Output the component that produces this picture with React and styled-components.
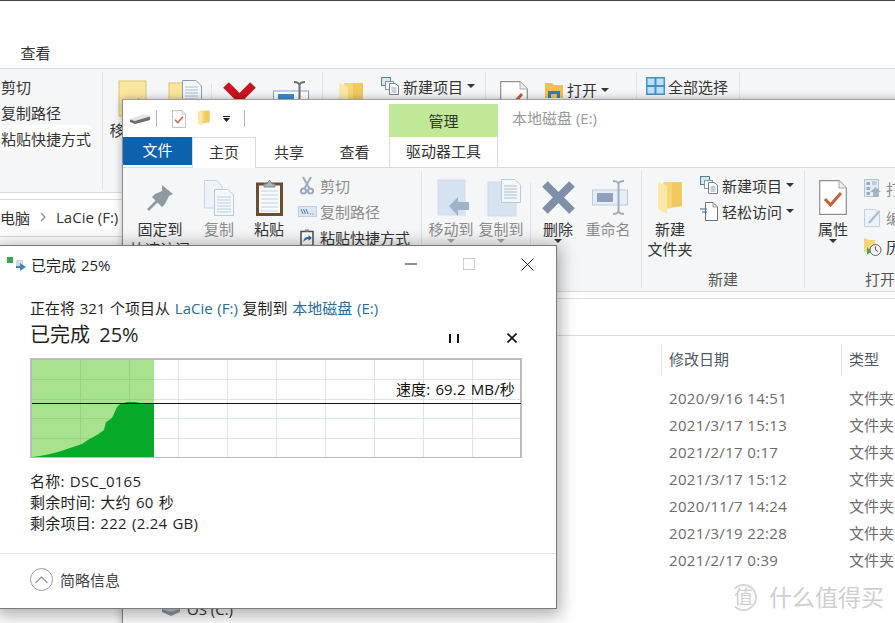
import React from 'react';
import styled, { createGlobalStyle } from 'styled-components';

const GlobalStyle = createGlobalStyle`
  html, body { margin: 0; padding: 0; background: #fff; }
  * { box-sizing: border-box; }
  body {
    font-family: "Open Sans", "Noto Sans CJK SC", sans-serif;
    font-size: 15px;
    color: #333;
  }
`;

const Desktop = styled.div`
  position: relative;
  width: 895px;
  height: 623px;
  overflow: hidden;
  background: #fff;
`;

/* windows sit on a free canvas, so these are the only placed boxes */
const Explorer = styled.section`
  position: absolute;
  left: ${p => p.$left}px;
  top: ${p => p.$top}px;
  width: 1200px;
  height: 700px;
  display: flex;
  flex-direction: column;
  background: #fff;
  border-left: 1px solid #8d8d8d;
  border-top: 1px solid ${p => p.$edge};
  box-shadow: 0 0 8px rgba(0, 0, 0, .3);
`;

const QuickBar = styled.div`
  height: 37px;
  display: flex;
  align-items: center;
  padding-left: 7px;
`;

const QuickSep = styled.i`
  width: 1px;
  height: 17px;
  background: #b4b4b4;
  margin: 0 ${p => p.$right}px 0 ${p => p.$left}px;
`;

const QuickIcon = styled.span`
  display: flex;
  margin-right: ${p => p.$right}px;
`;

const ManageTab = styled.div`
  align-self: flex-end;
  margin-left: 144px;
  width: 109px;
  height: 33px;
  background: #bfe997;
  color: #333;
  text-align: center;
  line-height: 35px;
`;

const DriveTitle = styled.div`
  margin: -2px 0 0 14px;
  color: #999;
`;

const TabRow = styled.div`
  height: 31px;
  display: flex;
  align-items: flex-start;
  border-bottom: 1px solid #dadbdc;
`;

const FileTab = styled.div`
  width: 69px;
  height: 28px;
  background: #0b62ad;
  color: #fff;
  text-align: center;
  line-height: 27px;
`;

const Tab = styled.div`
  width: ${p => p.$width}px;
  height: ${p => (p.$active ? 31 : 30)}px;
  line-height: 29px;
  text-align: center;
  background: #fff;
  border: 1px solid ${p => (p.$active ? '#dadbdc' : 'transparent')};
  border-bottom: none;
  ${p => p.$tool && 'margin-left: 2px; border-top: none; border-left-color: #dadbdc; border-right-color: #dadbdc;'}
`;

const Ribbon = styled.div`
  height: 124px;
  display: flex;
  padding: 3px 0;
  background: #f5f6f7;
  border-bottom: 1px solid #d9dadb;
`;

const Group = styled.div`
  flex: 0 0 ${p => p.$width}px;
  display: flex;
  flex-direction: column;
  border-right: 1px solid #e1e2e3;
`;

const GroupBody = styled.div`
  flex: 1;
  display: flex;
  padding-left: ${p => p.$pad || 0}px;
`;

const GroupLabel = styled.div`
  height: 18px;
  line-height: 18px;
  text-align: center;
  color: #555;
`;

const BigButton = styled.div`
  width: ${p => p.$width}px;
  display: flex;
  flex-direction: column;
  align-items: center;
  padding-top: 5px;
  color: ${p => (p.$off ? '#8b8b8b' : '#333')};
`;

const BigIcon = styled.div`
  height: 43px;
  display: flex;
  align-items: center;
  justify-content: center;
`;

const BigLabel = styled.div`
  line-height: 20px;
  text-align: center;
  white-space: nowrap;
`;

const Caret = styled.i`
  display: block;
  width: 0;
  height: 0;
  border-left: 4px solid transparent;
  border-right: 4px solid transparent;
  border-top: 4px solid ${p => (p.$off ? '#a5a5a5' : '#333')};
  margin: ${p => (p.$inline ? '0 0 0 4px' : '0')};
`;

const InnerSep = styled.i`
  width: 1px;
  height: 78px;
  margin: 12px 2px 0 4px;
  background: #e1e2e3;
`;

const SmallList = styled.div`
  display: flex;
  flex-direction: column;
  margin-left: ${p => p.$left}px;
  padding-top: ${p => p.$top || 1}px;
`;

const SmallItem = styled.div`
  height: ${p => p.$height || 26}px;
  display: flex;
  align-items: center;
  white-space: nowrap;
  color: ${p => (p.$off ? '#8b8b8b' : '#333')};
  background: ${p => (p.$lit ? '#fff' : 'transparent')};
`;

const SmallIcon = styled.span`
  flex: 0 0 22px;
  display: flex;
  align-items: center;
`;

const AddressBar = styled.div`
  margin-top: 6px;
  height: 38px;
  display: flex;
  align-items: center;
  gap: 10px;
  padding: 0 0 2px 181px;
  border-top: 1px solid #dcdcdc;
  border-bottom: 1px solid #dcdcdc;
`;

const Content = styled.div`
  flex: 1;
  display: flex;
`;

const NavPane = styled.div`
  flex: 0 0 197px;
  padding: 261px 0 0 39px;
`;

const NavRow = styled.div`
  height: 24px;
  display: flex;
  align-items: center;
  gap: 7px;
  color: #333;
`;

const FileTable = styled.div`
  padding-top: 8px;
  display: grid;
  grid-template-columns: 341px 180px 200px;
  grid-template-rows: 41px;
  grid-auto-rows: 27px;
  align-content: start;
`;

const HeadCell = styled.div`
  height: 32px;
  line-height: 30px;
  padding-left: 7px;
  color: #4c5a69;
  border-left: 1px solid #e4e5e6;
  grid-row: 1;
  grid-column: ${p => p.$col};
`;

const Cell = styled.div`
  padding-left: 8px;
  line-height: 26px;
  letter-spacing: ${p => (p.$latin ? '.33px' : '0')};
  color: #6b6b6b;
  white-space: nowrap;
  grid-column: ${p => p.$col};
`;

const Dialog = styled.section`
  position: absolute;
  left: -1px;
  top: 245px;
  width: 558px;
  height: 364px;
  display: flex;
  flex-direction: column;
  background: #fff;
  border: 1px solid #7a7a7a;
  box-shadow: 0 3px 16px 3px rgba(0, 0, 0, .33);
  color: #1f1f1f;
`;

const TitleBar = styled.div`
  height: 36px;
  display: flex;
  align-items: center;
  padding-left: 7px;
`;

const TitleText = styled.div`
  flex: 1;
  margin-left: 5px;
  word-spacing: 1px;
`;

const WindowButton = styled.div`
  width: 58px;
  height: 36px;
  display: flex;
  align-items: center;
  justify-content: center;
`;

const DialogBody = styled.div`
  padding: 16px 0 0 30px;
  width: 522px;
`;

const Status = styled.div`
  line-height: 20px;
  white-space: nowrap;
  word-spacing: .8px;
`;

const Place = styled.span`
  color: #2b6c99;
`;

const ProgressRow = styled.div`
  margin-top: 1px;
  height: 28px;
  display: flex;
  align-items: center;
  font-size: 20px;
  word-spacing: 4px;
`;

const ProgressText = styled.div`
  flex: 1;
`;

const ProgressControl = styled.div`
  width: 20px;
  height: 20px;
  margin: 10px 0 0 38px;
  display: flex;
  align-items: center;
  justify-content: center;
`;

const Chart = styled.div`
  position: relative;
  margin-top: 11px;
  width: 492px;
  height: 100px;
  border: 2px solid #bcbcbc;
  border-bottom-width: 1px;
  svg { display: block; overflow: visible; }
`;

const Speed = styled.div`
  position: absolute;
  right: 5px;
  top: 19px;
  line-height: 20px;
  letter-spacing: .15px;
  word-spacing: 1px;
  color: #111;
`;

const Details = styled.div`
  margin-top: 13px;
  line-height: 21px;
  letter-spacing: .25px;
  word-spacing: 1px;
`;

const Footer = styled.div`
  margin-top: 19px;
  flex: 1;
  display: flex;
  align-items: center;
  gap: 7px;
  padding: 0 0 3px 30px;
  border-top: 1px solid #e4e4e4;
  color: #444;
`;

const FoldButton = styled.div`
  width: 23px;
  height: 23px;
  border: 1px solid #9a9a9a;
  border-radius: 50%;
  display: flex;
  align-items: center;
  justify-content: center;
`;

const Watermark = styled.div`
  position: absolute;
  left: 730px;
  top: 583px;
  display: flex;
  align-items: center;
  gap: 12px;
  color: #cfcfcf;
  font-size: 23px;
  line-height: 28px;
`;

const WatermarkMark = styled.div`
  width: 27px;
  height: 27px;
  border: 2px solid #d6d6d6;
  border-left-color: transparent;
  border-radius: 50%;
  font-size: 19px;
  line-height: 22px;
  text-align: center;
`;

// ---- icons ----

const DriveIcon = () => (
  <svg width="20" height="10" viewBox="0 0 20 10">
    <path d="M0 5 L14 0 L20 2 L20 6 L5 10 L0 8Z" fill="#e4e4e4" />
    <path d="M0 5.500 L5 7 L20 2.500 L20 6 L5 10 L0 8Z" fill="#6e6e6e" />
  </svg>
);

const CheckPage = ({ w = 28, h = 35 }) => (
  <svg width={w} height={h} viewBox="0 0 28 35">
    <path d="M.7.7H20L27.3 8V34.3H.7Z" fill="#fff" stroke="#8f8f8f" strokeWidth="1.2" />
    <path d="M20 .7V8H27.3" fill="#eee" stroke="#aaa" />
    <path d="M6 19L11.5 25L22 13" fill="none" stroke="#c8603a" strokeWidth="3" />
  </svg>
);

const Folder = ({ w = 25, h = 34 }) => (
  <svg width={w} height={h} viewBox="0 0 25 34">
    <path d="M5 1H24V25L8 28Z" fill="#f6d676" />
    <path d="M14 1H24V25L14 26Z" fill="#f1c95f" />
    <path d="M0 1L9 5V33L0 28Z" fill="#fbe8a8" />
  </svg>
);

const Pin = () => (
  <svg width="27" height="27" viewBox="0 0 27 27">
    <path d="M15 1L26 10L22 12L18 20L15 23L5 13L8 10L15 7Z" fill="#8e99a2" />
    <path d="M10 17L1 26" stroke="#8e99a2" strokeWidth="2.6" />
  </svg>
);

const CopyDocs = () => (
  <svg width="30" height="36" viewBox="0 0 30 36">
    <path d="M.5.5H13L18 6V28H.5Z" fill="#eef3fa" stroke="#c6d4e6" />
    <path d="M10.5 9.5H24L29.5 15V35.5H10.5Z" fill="#f4f7fb" stroke="#b9cadf" />
    <path d="M13 17H27M13 20H27M13 23H27M13 26H27M13 29H27M13 32H27" stroke="#bccde0" />
  </svg>
);

const Clipboard = () => (
  <svg width="27" height="37" viewBox="0 0 27 37">
    <rect x="1.5" y="5" width="24" height="30.5" fill="#f7f9fb" stroke="#6d4c30" strokeWidth="3" />
    <path d="M5 12H22M5 16H22M5 20H22M5 24H22M5 28H22M5 32H22" stroke="#c3d2e2" />
    <path d="M8 8V5H11L13.500 1L16 5H19V8Z" fill="#a9b4be" stroke="#7d8790" />
  </svg>
);

const Scissors = () => (
  <svg width="16" height="19" viewBox="-2 0 16 19" fill="none" stroke="#9aacc0" strokeWidth="2">
    <circle cx="3.500" cy="15" r="2.600" />
    <circle cx="10.500" cy="15" r="2.600" />
    <path d="M4.500 12.500L11 1M9.500 12.500L3 1" />
  </svg>
);

const PathIcon = () => (
  <svg width="19" height="11" viewBox="0 0 19 11">
    <rect x=".5" y=".5" width="18" height="10" fill="#dce5f2" stroke="#c0cde0" />
    <path d="M3 3L5 8M5.500 3L7.500 8M8 3L10 8" stroke="#5d7391" />
    <path d="M12 8H13M14.500 8H15.500" stroke="#5d7391" />
  </svg>
);

const PasteLink = () => (
  <svg width="17" height="17" viewBox="-2 0 17 17">
    <rect x="1" y="2.500" width="12" height="14" fill="#fff" stroke="#4b4b4b" strokeWidth="1.500" />
    <path d="M5 2.500H9V.5H5Z" fill="#888" />
    <path d="M3.500 13C3.500 9 5.500 8 8.500 8V6L12 9L8.500 12V10C6.500 10 5 11 3.500 13Z" fill="#2a6da8" />
  </svg>
);

const MoveIcon = ({ on }) => (
  <svg width="38" height="38" viewBox="-5 0 38 38">
    <rect x="1" y="1" width="27" height="35" fill={on ? '#fbe6a0' : '#d8e3f1'} stroke={on ? '#d9c37a' : '#d0dcec'} />
    <path d="M12 27L21 18V23H32V31H21V37Z" fill={on ? '#5a5a5a' : '#9fb3cc'} />
  </svg>
);

const CopyToIcon = ({ on }) => (
  <svg width="40" height="38" viewBox="-6 0 40 38">
    <rect x="1" y="3" width="28" height="34" fill={on ? '#fbe6a0' : '#d8e3f1'} stroke={on ? '#d9c37a' : '#d0dcec'} />
    <path d="M14.500.5H28L33.500 6V23.500H14.500Z" fill="#f4f7fb" stroke={on ? '#8d9db0' : '#b9cadf'} />
    <path d="M17 7H30M17 10H30M17 13H30M17 16H30M17 19H30" stroke="#a9bdd5" />
  </svg>
);

const DeleteIcon = ({ on }) => (
  <svg width="33" height="33" viewBox="0 0 33 33">
    <path d="M3 3L30 30M30 3L3 30" stroke={on ? '#c8141e' : '#7f8fa9'} strokeWidth="8" />
  </svg>
);

const RenameIcon = ({ on }) => (
  <svg width="39" height="35" viewBox="-3 0 39 35">
    <rect x=".5" y="10" width="35" height="15" fill={on ? '#fff' : '#e7edf5'} stroke={on ? '#7da7cf' : '#bcc9dc'} />
    <rect x="5" y="13" width="16" height="9" fill={on ? '#3b8bd4' : '#8ea0bb'} />
    <path d="M21 1C24 1 26 2 26.500 4V31C26 33 24 34 21 34M32 1C29 1 27 2 26.500 4M26.500 31C27 33 29 34 32 34" fill="none" stroke={on ? '#6f6f6f' : '#a0adc0'} strokeWidth="2" />
  </svg>
);

const NewItemIcon = () => (
  <svg width="18" height="18" viewBox="0 0 18 18">
    <rect x=".5" y=".5" width="9" height="8" fill="#d5e6ee" stroke="#4f8596" />
    <rect x="4.500" y="4.500" width="8" height="8" fill="#f4f7fb" stroke="#8a98a6" />
    <path d="M8.500 6.500H14L17.500 9V17.500H8.500Z" fill="#fff" stroke="#77838f" />
    <path d="M10.500 11H15.500M10.500 13H15.500M10.500 15H15.500" stroke="#8fa4b8" />
  </svg>
);

const EasyIcon = () => (
  <svg width="18" height="19" viewBox="0 0 18 19">
    <path d="M5.500.5H13L17.500 5V18.500H5.500Z" fill="#fff" stroke="#6f6f6f" />
    <path d="M13 .5V5H17.500" fill="none" stroke="#9a9a9a" />
    <path d="M0 7H7M2 10H7" stroke="#2a6da8" strokeWidth="1.200" />
  </svg>
);

const OpenIcon = ({ on }) =>
  on ? (
    <svg width="19" height="18" viewBox="0 0 19 18">
      <path d="M0 2H7L9 4H18V17H0Z" fill="#f2c04f" />
      <path d="M3 10H15V17H12V13H6V17H3Z" fill="#2f7fb8" />
    </svg>
  ) : (
    <svg width="17" height="19" viewBox="0 0 17 19">
      <rect x=".5" y=".5" width="14" height="17" fill="#e6ecf4" stroke="#b5c2d2" />
      <path d="M2.500 3H6V6H2.500ZM2.500 8H6V11H2.500ZM2.500 13H6V16H2.500Z" fill="#9aaabd" />
      <path d="M8 3H12.500M8 5H12.500" stroke="#9aaabd" />
      <path d="M11.500 8L17 13H14V18H9V13H6Z" fill="#a3b4c8" />
    </svg>
  );

const EditIcon = () => (
  <svg width="17" height="18" viewBox="0 0 17 18">
    <path d="M.5.5H11L15.500 5V17.500H.5Z" fill="#eef3fa" stroke="#c0cfe0" />
    <path d="M5 14L15.500 2" stroke="#a9bdd5" strokeWidth="2.400" />
  </svg>
);

const HistoryIcon = () => (
  <svg width="18" height="18" viewBox="0 0 18 18">
    <path d="M0 0L6 2H11V14H0Z" fill="#f6d676" />
    <circle cx="11.500" cy="12" r="5.500" fill="#f1f1f1" stroke="#666" />
    <path d="M11.500 8.500V12L14 13.500" fill="none" stroke="#555" />
    <path d="M3 9L7 13.500L3 17Z" fill="#3ea552" />
  </svg>
);

const SelectAllIcon = () => (
  <svg width="19" height="18" viewBox="0 0 19 18">
    <rect width="19" height="18" fill="#3f93d4" />
    <path d="M1.500 1.500H8.500V8H1.500ZM10.500 1.500H17.500V8H10.500ZM1.500 10H8.500V16.500H1.500ZM10.500 10H17.500V16.500H10.500Z" fill="#bfe0f5" />
  </svg>
);

const QuickCaret = () => (
  <svg width="7" height="6" viewBox="0 0 7 6">
    <path d="M0 0H7V1H0ZM0 2H7L3.500 6Z" fill="#222" />
  </svg>
);

const Chevron = () => (
  <svg width="6" height="10" viewBox="0 0 6 10">
    <path d="M1 1L5 5L1 9" fill="none" stroke="#8a8a8a" strokeWidth="1.200" />
  </svg>
);

const ComputerDrive = () => (
  <svg width="18" height="13" viewBox="0 0 18 13">
    <path d="M0 6L9 3L18 6V9L9 13L0 9Z" fill="#8d9aa5" />
    <path d="M0 6L9 9L18 6L9 3Z" fill="#c4ccd3" />
    <path d="M3 0H8V4H3Z" fill="#3f93d4" />
  </svg>
);

const CopyGlyph = () => (
  <svg width="19" height="14" viewBox="0 0 19 14">
    <rect width="6" height="6" fill="#3ea552" />
    <rect x="9" y="3" width="7" height="6" fill="#d5dbe0" />
    <path d="M9 9H13V6L19 10L13 14V11H9Z" fill="#3c87c9" />
  </svg>
);

const Minimize = () => (
  <svg width="12" height="2" viewBox="0 0 12 2"><path d="M0 1H12" stroke="#222" /></svg>
);

const Maximize = () => (
  <svg width="12" height="12" viewBox="0 0 12 12"><rect x=".5" y=".5" width="11" height="11" fill="none" stroke="#cdcdcd" /></svg>
);

const CloseThin = () => (
  <svg width="13" height="13" viewBox="0 0 13 13"><path d="M.5.5L12.500 12.500M12.500.5L.5 12.500" stroke="#222" /></svg>
);

const Pause = () => (
  <svg width="10" height="9" viewBox="0 0 10 9"><path d="M1 0V9M9 0V9" stroke="#111" strokeWidth="2" /></svg>
);

const CloseBold = () => (
  <svg width="10" height="10" viewBox="0 0 10 10"><path d="M.5.5L9.500 9.500M9.500.5L.5 9.500" stroke="#111" strokeWidth="1.600" /></svg>
);

const FoldChevron = () => (
  <svg width="13" height="8" viewBox="0 0 13 8"><path d="M.5 7L6.500 1L12.500 7" fill="none" stroke="#9a9a9a" strokeWidth="1.300" /></svg>
);

// ---- speed chart ----

const chartW = 488;
const chartH = 97;
const gridX = [48, 97, 146, 195, 244, 293, 342, 391, 440];
const gridY = [19, 39, 58, 78];
const doneX = 122;

// traced from the curve: [x, y] inside the plot
const curve = [
  [0, 97], [8, 96], [18, 94], [26, 92], [35, 89], [41, 87], [50, 84], [56, 80],
  [65, 75], [72, 70], [74, 62], [80, 58], [85, 47], [88, 44], [95, 42], [103, 42],
  [113, 44], [122, 44], [122, 97],
];

const SpeedChart = () => (
  <svg width={chartW} height={chartH} viewBox={`0 0 ${chartW} ${chartH}`}>
    <rect width={doneX} height={chartH} fill="#a8e28f" />
    {gridX.map(x => (
      <path key={x} d={`M${x + .5} 0V${chartH}`} stroke={x < doneX ? '#96d580' : '#d9e9e1'} />
    ))}
    {gridY.map(y => (
      <React.Fragment key={y}>
        <path d={`M0 ${y + .5}H${doneX}`} stroke="#96d580" />
        <path d={`M${doneX} ${y + .5}H${chartW}`} stroke="#d9e9e1" />
      </React.Fragment>
    ))}
    <polygon points={curve.map(p => p.join(',')).join(' ')} fill="#08aa2a" />
    <path d={`M0 43.5H${chartW + 1}`} stroke="#111" />
  </svg>
);

// ---- explorer window ----

const rows = [
  '2020/9/16 14:51',
  '2021/3/17 15:13',
  '2021/2/17 0:17',
  '2021/3/17 15:12',
  '2020/11/7 14:24',
  '2021/3/19 22:28',
  '2021/2/17 0:39',
];

const ExplorerWindow = ({ left, top, edge, on, drive, place, lit }) => (
  <Explorer $left={left} $top={top} $edge={edge}>
    <QuickBar>
      <QuickIcon><DriveIcon /></QuickIcon>
      <QuickSep $left={6} $right={15} />
      <QuickIcon $right={12}><CheckPage w={14} h={18} /></QuickIcon>
      <QuickIcon $right={13}><Folder w={12} h={17} /></QuickIcon>
      <QuickIcon><QuickCaret /></QuickIcon>
      <QuickSep $left={14} $right={0} />
      {drive && <ManageTab>管理</ManageTab>}
      {drive && <DriveTitle>{drive}</DriveTitle>}
    </QuickBar>
    <TabRow>
      <FileTab>文件</FileTab>
      <Tab $width={64} $active>主页</Tab>
      <Tab $width={66}>共享</Tab>
      <Tab $width={65}>查看</Tab>
      {drive && <Tab $width={109} $tool>驱动器工具</Tab>}
    </TabRow>
    <Ribbon>
      <Group $width={299}>
        <GroupBody>
          <BigButton $width={74}>
            <BigIcon><Pin /></BigIcon>
            <BigLabel>固定到<br />快速访问</BigLabel>
          </BigButton>
          <BigButton $width={44} $off={!on}>
            <BigIcon><CopyDocs /></BigIcon>
            <BigLabel>复制</BigLabel>
          </BigButton>
          <BigButton $width={56}>
            <BigIcon><Clipboard /></BigIcon>
            <BigLabel>粘贴</BigLabel>
          </BigButton>
          <SmallList $left={1}>
            <SmallItem $off={!on}><SmallIcon><Scissors /></SmallIcon>剪切</SmallItem>
            <SmallItem $off={!on}><SmallIcon><PathIcon /></SmallIcon>复制路径</SmallItem>
            <SmallItem $lit={lit}><SmallIcon><PasteLink /></SmallIcon>粘贴快捷方式</SmallItem>
          </SmallList>
        </GroupBody>
        <GroupLabel>剪贴板</GroupLabel>
      </Group>
      <Group $width={220}>
        <GroupBody $pad={4}>
          <BigButton $width={50} $off={!on}>
            <BigIcon><MoveIcon on={on} /></BigIcon>
            <BigLabel>移动到</BigLabel>
            <Caret $off={!on} />
          </BigButton>
          <BigButton $width={50} $off={!on}>
            <BigIcon><CopyToIcon on={on} /></BigIcon>
            <BigLabel>复制到</BigLabel>
            <Caret $off={!on} />
          </BigButton>
          <InnerSep />
          <BigButton $width={50}>
            <BigIcon><DeleteIcon on={on} /></BigIcon>
            <BigLabel>删除</BigLabel>
            <Caret />
          </BigButton>
          <BigButton $width={50} $off={!on}>
            <BigIcon><RenameIcon on={on} /></BigIcon>
            <BigLabel>重命名</BigLabel>
          </BigButton>
        </GroupBody>
        <GroupLabel>组织</GroupLabel>
      </Group>
      <Group $width={163}>
        <GroupBody>
          <BigButton $width={56}>
            <BigIcon><Folder /></BigIcon>
            <BigLabel>新建<br />文件夹</BigLabel>
          </BigButton>
          <SmallList $left={2}>
            <SmallItem><SmallIcon><NewItemIcon /></SmallIcon>新建项目<Caret $inline /></SmallItem>
            <SmallItem><SmallIcon><EasyIcon /></SmallIcon>轻松访问<Caret $inline /></SmallItem>
          </SmallList>
        </GroupBody>
        <GroupLabel>新建</GroupLabel>
      </Group>
      <Group $width={151}>
        <GroupBody>
          <BigButton $width={56}>
            <BigIcon><CheckPage /></BigIcon>
            <BigLabel>属性</BigLabel>
            <Caret />
          </BigButton>
          <SmallList $left={3} $top={3}>
            <SmallItem $height={29} $off={!on}><SmallIcon><OpenIcon on={on} /></SmallIcon>打开<Caret $inline /></SmallItem>
            <SmallItem $height={29} $off={!on}><SmallIcon><EditIcon /></SmallIcon>编辑</SmallItem>
            <SmallItem $height={29}><SmallIcon><HistoryIcon /></SmallIcon>历史记录</SmallItem>
          </SmallList>
        </GroupBody>
        <GroupLabel>打开</GroupLabel>
      </Group>
      <Group $width={103}>
        <GroupBody>
          <SmallList $left={9}>
            <SmallItem><SmallIcon><SelectAllIcon /></SmallIcon>全部选择</SmallItem>
          </SmallList>
        </GroupBody>
        <GroupLabel>选择</GroupLabel>
      </Group>
    </Ribbon>
    <AddressBar>
      此电脑<Chevron />{place}
    </AddressBar>
    <Content>
      <NavPane>
        <NavRow><ComputerDrive />OS (C:)</NavRow>
      </NavPane>
      {drive && (
        <FileTable>
          <HeadCell $col={2}>修改日期</HeadCell>
          <HeadCell $col={3}>类型</HeadCell>
          {rows.map(r => (
            <React.Fragment key={r}>
              <Cell $col={2} $latin>{r}</Cell>
              <Cell $col={3}>文件夹</Cell>
            </React.Fragment>
          ))}
        </FileTable>
      )}
    </Content>
  </Explorer>
);

export default function App() {
  return (
    <Desktop>
      <GlobalStyle />
      <ExplorerWindow left={-197} top={0} edge="#444" on place="LaCie (F:)" lit />
      <ExplorerWindow left={122} top={99} edge="#a0a0a0" drive="本地磁盘 (E:)" place="本地磁盘 (E:)" />
      <Dialog>
        <TitleBar>
          <CopyGlyph />
          <TitleText>已完成 25%</TitleText>
          <WindowButton><Minimize /></WindowButton>
          <WindowButton><Maximize /></WindowButton>
          <WindowButton><CloseThin /></WindowButton>
        </TitleBar>
        <DialogBody>
          <Status>正在将 321 个项目从 <Place>LaCie (F:)</Place> 复制到 <Place>本地磁盘 (E:)</Place></Status>
          <ProgressRow>
            <ProgressText>已完成 25%</ProgressText>
            <ProgressControl><Pause /></ProgressControl>
            <ProgressControl><CloseBold /></ProgressControl>
          </ProgressRow>
          <Chart>
            <SpeedChart />
            <Speed>速度: 69.2 MB/秒</Speed>
          </Chart>
          <Details>
            <div>名称: DSC_0165</div>
            <div>剩余时间: 大约 60 秒</div>
            <div>剩余项目: 222 (2.24 GB)</div>
          </Details>
        </DialogBody>
        <Footer>
          <FoldButton><FoldChevron /></FoldButton>
          简略信息
        </Footer>
      </Dialog>
      <Watermark>
        <WatermarkMark>值</WatermarkMark>
        什么值得买
      </Watermark>
    </Desktop>
  );
}
